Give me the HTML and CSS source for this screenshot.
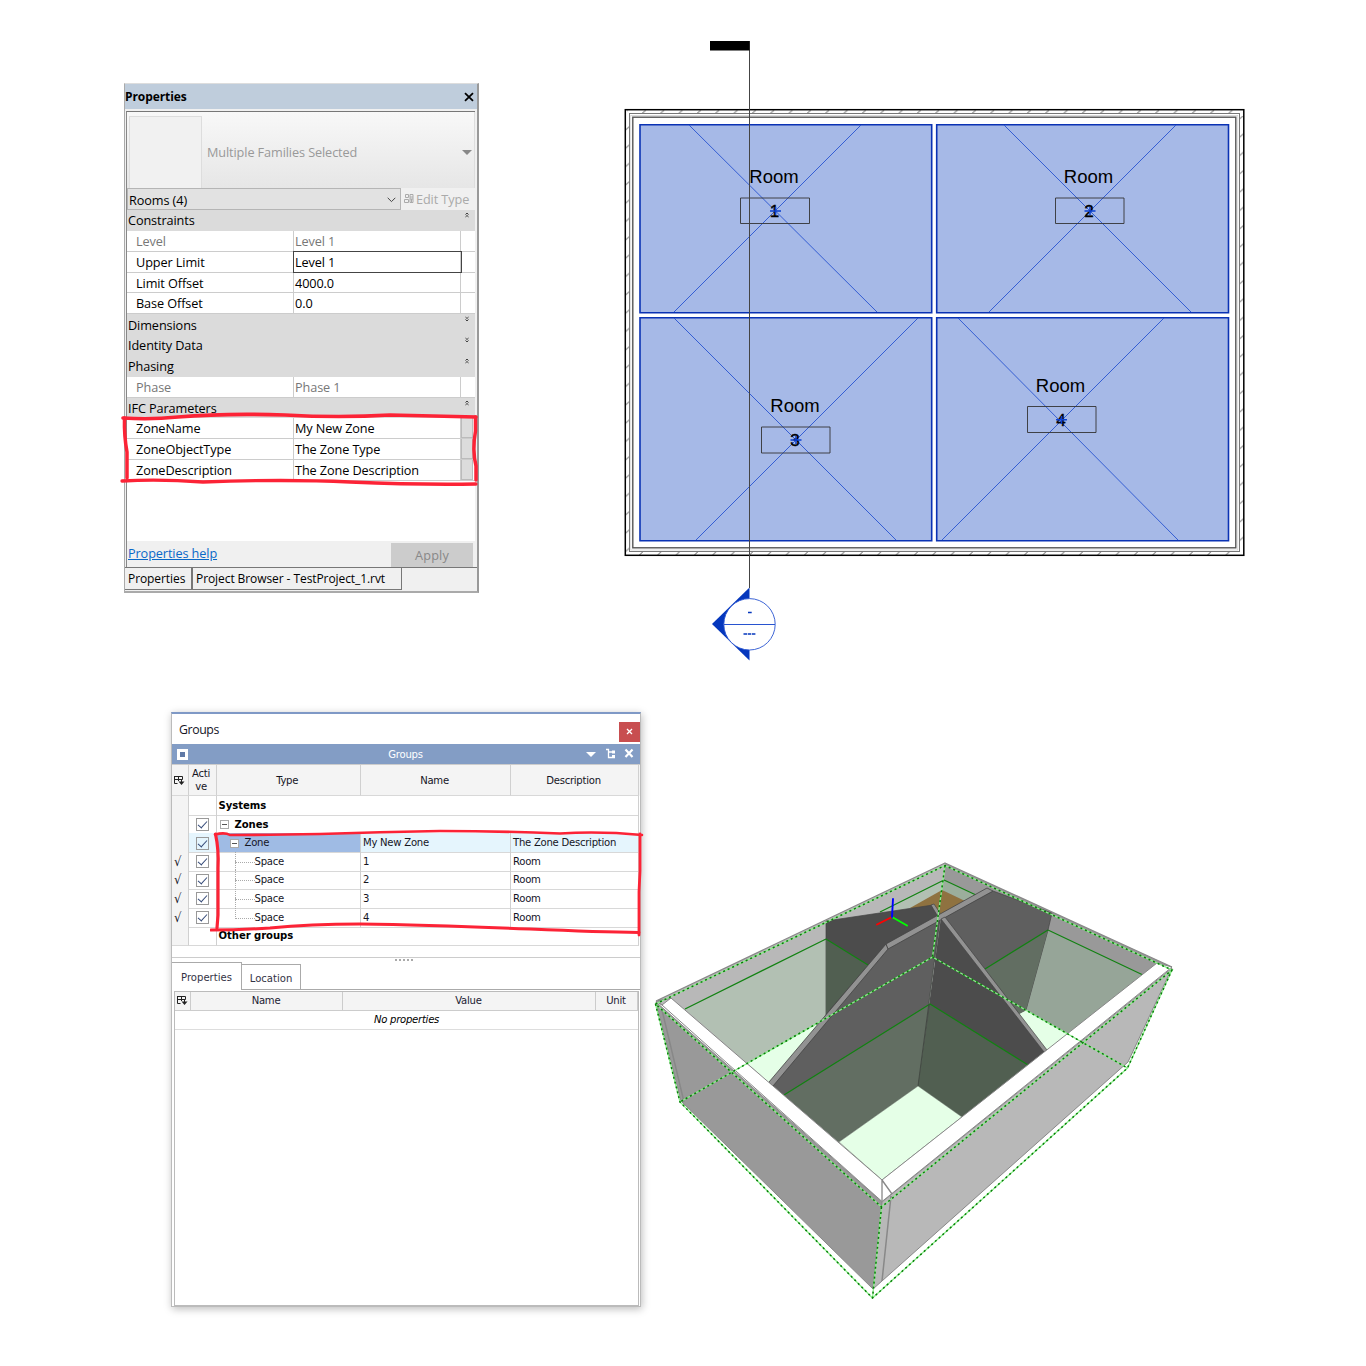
FILE: index.html
```html
<!DOCTYPE html>
<html lang="en">
<head>
<meta charset="utf-8">
<title>Zones and spaces</title>
<link rel="stylesheet" href="styles.css">
</head>
<body>
<main class="board">
<section class="top">
<article class="palette">
  <header class="palette-title"><b>Properties</b>
    <svg width="10" height="10" viewBox="0 0 10 10"><path d="M1 1.2 9 8.8M9 1.2 1 8.8" stroke="#000" stroke-width="1.8"/></svg>
  </header>
  <div class="palette-body">
    <div class="family"><div class="thumb"></div><span>Multiple Families Selected</span><i class="drop"></i></div>
    <div class="filter">
      <div class="select"><span>Rooms (4)</span><svg width="9" height="6" viewBox="0 0 9 6"><path d="M.7.8 4.5 4.6 8.3.8" fill="none" stroke="#444"/></svg></div>
      <div class="edit"><svg width="10" height="10" viewBox="0 0 10 10"><g fill="none" stroke="#aaa"><path d="M1.5.5h3v3h-3zM.5 5.5h4v3h-4zM6 .5h3v8H6zM6 3h3M6 5h3M7.5 5v4"/></g></svg><span>Edit Type</span></div>
    </div>
    <div class="group"><span>Constraints</span><svg class="chev" viewBox="0 0 4 5"><path d="M.5 2 2 .6 3.500 2M.5 4.400 2 3 3.500 4.400"/></svg></div>
    <div class="prop dim"><span>Level</span><span>Level 1</span><i></i></div>
    <div class="prop active"><span>Upper Limit</span><span>Level 1</span><i></i></div>
    <div class="prop"><span>Limit Offset</span><span>4000.0</span><i></i></div>
    <div class="prop"><span>Base Offset</span><span>0.0</span><i></i></div>
    <div class="group"><span>Dimensions</span><svg class="chev" viewBox="0 0 4 5"><path d="M.5.6 2 2 3.500.6M.5 3 2 4.400 3.500 3"/></svg></div>
    <div class="group"><span>Identity Data</span><svg class="chev" viewBox="0 0 4 5"><path d="M.5.6 2 2 3.500.6M.5 3 2 4.400 3.500 3"/></svg></div>
    <div class="group"><span>Phasing</span><svg class="chev" viewBox="0 0 4 5"><path d="M.5 2 2 .6 3.500 2M.5 4.400 2 3 3.500 4.400"/></svg></div>
    <div class="prop dim"><span>Phase</span><span>Phase 1</span><i></i></div>
    <div class="group"><span>IFC Parameters</span><svg class="chev" viewBox="0 0 4 5"><path d="M.5 2 2 .6 3.500 2M.5 4.400 2 3 3.500 4.400"/></svg></div>
    <div class="prop more"><span>ZoneName</span><span>My New Zone</span><i></i></div>
    <div class="prop more"><span>ZoneObjectType</span><span>The Zone Type</span><i></i></div>
    <div class="prop more"><span>ZoneDescription</span><span>The Zone Description</span><i></i></div>
    <div class="blank"></div>
    <footer class="help"><a>Properties help</a><div class="apply">Apply</div></footer>
  </div>
  <nav class="palette-tabs"><div class="on">Properties</div><div class="off">Project Browser - TestProject_1.rvt</div></nav>
  <svg class="ink ink-a" width="362" height="76" viewBox="120 412 362 76">
    <path d="M123 418Q150 420 178 417Q225 413 285 415Q340 418 390 415L476 417" stroke-width="3.600"/>
    <path d="M124.500 418Q124 436 127 452V478" stroke-width="3.500"/>
    <path d="M475.500 417V431Q472 450 476 466V480" stroke-width="3.500"/>
    <path d="M122 481Q160 479 203 482Q285 479 350 482Q420 485 476 484" stroke-width="3.300"/>
  </svg>
</article>

<svg class="plan" width="646" height="640" viewBox="610 30 646 640">
  <defs>
    <pattern id="hx" x="642" y="109.500" width="18.330" height="5" patternUnits="userSpaceOnUse"><path d="M0 4 4 .5" stroke="#444" stroke-width=".9"/></pattern>
    <pattern id="hxb" x="639" y="551" width="18.330" height="5" patternUnits="userSpaceOnUse"><path d="M0 4.500 4 .5" stroke="#444" stroke-width=".9"/></pattern>
    <pattern id="hy" x="625.500" y="126" width="4" height="18.330" patternUnits="userSpaceOnUse"><path d="M0 4 4 .5" stroke="#444" stroke-width=".9"/></pattern>
    <pattern id="hyr" x="1239.500" y="115" width="4" height="18.330" patternUnits="userSpaceOnUse"><path d="M0 4 4 .5" stroke="#444" stroke-width=".9"/></pattern>
  </defs>
  <path d="M627 110h615v4H627z" fill="url(#hx)"/><path d="M627 551.500h615v4H627z" fill="url(#hxb)"/>
  <path d="M625.500 116h4v436h-4z" fill="url(#hy)"/><path d="M1239.500 116h4v436h-4z" fill="url(#hyr)"/>
  <g fill="none">
    <rect x="625.300" y="109.700" width="618.500" height="445.600" stroke="#000" stroke-width="1.500"/>
    <rect x="629.500" y="113.500" width="610" height="438" stroke="#777"/>
    <rect x="630.800" y="115.500" width="607" height="434.500" stroke="#ccc" stroke-width=".7"/>
    <rect x="632.800" y="117.200" width="603" height="430.600" stroke="#555" stroke-width="1.400"/>
  </g>
  <g fill="#a6b9e7" stroke="#0a32b4" stroke-width="1.600">
    <path d="M640 124.700h291.700v188H640zM936.700 124.700h291.800v188H936.700zM640 317.800h291.700v222.900H640zM936.700 317.800h291.800v222.900H936.700z"/>
  </g>
  <path d="M689 125 877 312M861 125 674 312M1004 125 1191 312M1176 125 989 312M674 318 896 540M918 318 696 540M958 318 1178 540M1164 318 942 540" fill="none" stroke="#2854d0" stroke-width=".9"/>
  <path d="M740.500 198h69v25.500h-69zM1055.500 198h68.500v25.500h-68.500zM761.500 427h68.500v26h-68.500zM1027.500 406.500h68.500v26h-68.500z" fill="none" stroke="#333" stroke-width=".9"/>
  <path d="M749.500 41V588" fill="none" stroke="#444" stroke-width="1"/>
  <path d="M710 41h39.500v9.500H710z"/>
  <g class="room"><text x="774" y="183">Room</text><text x="1088.500" y="183">Room</text><text x="795" y="412">Room</text><text x="1060.500" y="392">Room</text></g>
  <g class="room num"><text x="774.500" y="217">1</text><text x="1089" y="217">2</text><text x="795" y="446">3</text><text x="1061" y="426">4</text></g>
  <path d="M770 211h11M775.500 207v8M1084.500 211h11M1090 207v8M790.500 440h11M796 436v8M1056 419.800h11M1061.500 416v8" stroke="#0a3fd0" stroke-width="1.500"/>
  <path d="M712 624 749.500 587.500V660.500Z" fill="#0537bd"/>
  <circle cx="749.500" cy="624.300" r="25.700" fill="#fff" stroke="#2854d0" stroke-width=".9"/>
  <path d="M724 624.500h51" stroke="#2854d0"/>
  <path d="M748 612.500h3.700M743.500 634h3.500M747.700 634h3.500M751.900 634h3.500" stroke="#0537bd" stroke-width="1.500"/>
</svg>
</section>

<section class="bottom">
<article class="groups">
  <header class="win-title"><span>Groups</span><div class="close"><svg width="7" height="7" viewBox="0 0 7 7"><path d="m1 1 5 5M6 1 1 6" stroke="#fff" stroke-width="1.300"/></svg></div></header>
  <div class="bar"><i class="sq"></i><span>Groups</span>
    <svg width="52" height="14" viewBox="0 0 52 14"><path d="M0 5h10L5 10z" fill="#fff"/><path d="M20 2.500h3M22.500 2v8.500H29M22.500 5H29" fill="none" stroke="#fff" stroke-width="1.300"/><path d="M26 3.500h3v3h-3zM26 8h3v3h-3z" fill="#fff"/><path d="m39.500 2.500 7 7.500M46.500 2.500 39.500 10" stroke="#fff" stroke-width="2.200"/></svg>
  </div>
  <div class="grid head">
    <div><svg width="12" height="11" viewBox="0 0 12 11"><path d="M1.500 1.500h8v3M1.500 1v7.500h3M1.500 4.500h8M5.500 1v5" fill="none" stroke="#222"/><path d="M5.500 6.500h6L8.500 10zM8 5h1v2H8z" fill="#222"/></svg></div>
    <div>Acti<br>ve</div><div>Type</div><div>Name</div><div>Description</div>
  </div>
  <div class="grid span"><div></div><div></div><div class="b">Systems</div></div>
  <div class="grid span"><div></div><div><i class="cb"></i></div><div class="b zones"><i class="minus"></i>Zones</div></div>
  <div class="grid sel"><div></div><div><i class="cb"></i></div><div class="zone"><i class="minus"></i>Zone</div><div>My New Zone</div><div>The Zone Description</div></div>
  <div class="grid"><div>√</div><div><i class="cb"></i></div><div class="space">Space</div><div>1</div><div>Room</div></div>
  <div class="grid"><div>√</div><div><i class="cb"></i></div><div class="space">Space</div><div>2</div><div>Room</div></div>
  <div class="grid"><div>√</div><div><i class="cb"></i></div><div class="space">Space</div><div>3</div><div>Room</div></div>
  <div class="grid"><div>√</div><div><i class="cb"></i></div><div class="space last">Space</div><div>4</div><div>Room</div></div>
  <div class="grid span"><div></div><div></div><div class="b">Other groups</div></div>
  <div class="splitter"><i></i></div>
  <nav class="tabs"><div class="on">Properties</div><div class="off">Location</div></nav>
  <div class="details">
    <div class="dhead"><div><svg width="12" height="11" viewBox="0 0 12 11"><path d="M1.500 1.500h8v3M1.500 1v7.500h3M1.500 4.500h8M5.500 1v5" fill="none" stroke="#222"/><path d="M5.500 6.500h6L8.500 10zM8 5h1v2H8z" fill="#222"/></svg></div><div>Name</div><div>Value</div><div>Unit</div></div>
    <div class="none">No properties</div>
  </div>
  <svg class="ink ink-b" width="434" height="112" viewBox="210 827 434 112">
    <path d="M215 834.500Q225 832 230 835Q270 835 320 834Q380 832 440 831Q500 831 560 833.500Q600 831 642 835" stroke-width="2.600"/>
    <path d="M215.500 834Q219 850 218 868V915L217 928" stroke-width="3.200"/>
    <path d="M640 834V871L639 892V935" stroke-width="2.800"/>
    <path d="M211 930Q240 930 270 928Q310 924 360 924Q430 925 530 929Q600 932 639 932.500" stroke-width="3"/>
  </svg>
</article>

<svg class="model" width="530" height="450" viewBox="650 855 530 450">
  <g stroke-linejoin="round">
  <!-- back walls and floor -->
  <path d="M656 1001 945 863 941 957 775 1085z" fill="#b8b8b8"/>
  <path d="M945 863 1172 967 1068 1036 940 957z" fill="#999"/>
  <path d="M685 1009 826 939V1024L747 1063z" fill="#b2c0b3"/>
  <path d="M880 912 944 880 942 892 910 909z" fill="#b2c0b3"/><path d="M944 880 976 895 965 901 942 890z" fill="#9bae9c"/>
  <path d="M942 890 965 901 941 916 910 908z" fill="#8f7240"/>
  <path d="M747 1063 830 1017 800 1070 769 1082z" fill="#e5ffe7"/>
  <path d="M1048 930 1143 975 1068 1034 1026 1010z" fill="#96a598"/>
  <path d="M1018 1014 1026 1010 1068 1034 1046 1052z" fill="#e5ffe7"/>
  <path d="M685 1009 826 939M880 912 944 880 976 895M1048 930 1143 975" stroke="#118211" stroke-width="1.200" fill="none"/>
  <!-- interior walls -->
  <path d="M826 921 933 905 941 916 886 949 826 1016z" fill="#4c4c4c" stroke="#444" stroke-width=".7"/>
  <path d="M826 939 868 965 826 1014z" fill="#515f51"/><path d="m826 939 42 26" stroke="#118211" stroke-width="1.200"/>
  <path d="M993 891 1052 913 1048 930 1026 1010 1018 1014 942 918z" fill="#5f5f5f" stroke="#444" stroke-width=".7"/>
  <path d="M985 969 1048 930 1026 1010 1019 1014z" fill="#626e62"/><path d="m985 969 63-39" stroke="#118211" stroke-width="1.200"/>
  <path d="M886 949 940 919 918 1086 839 1142 771 1085z" fill="#5f5f5f"/>
  <path d="M784 1095 930 1004 918 1086 838 1142z" fill="#626e62"/>
  <path d="M941 917 1046 1051 1028 1066 962 1117 918 1086z" fill="#4c4c4c"/>
  <path d="M930 1004 1028 1065 962 1117 918 1086z" fill="#515f51"/>
  <path d="M784 1095 930 1004 1028 1065" stroke="#118211" stroke-width="1.200" fill="none"/>
  <path d="M940 919 918 1086" stroke="#3d443d" stroke-width=".8"/>
  <path d="M918 1086 962 1117 882 1180 839 1142z" fill="#e5ffe7" stroke="#647064" stroke-width=".6"/>
  <path d="M769 1082 886 944 987 888 993 891 888 949 773 1086z" fill="#929292" stroke="#444" stroke-width=".8"/>
  <path d="M886 944 888 949" stroke="#444"/>
  <path d="M941 919 945 917 1047 1050 1044 1052zM931 905 934 904 940 913 937 915z" fill="#929292" stroke="#444" stroke-width=".7"/>
  <!-- outer faces and rim -->
  <path d="M656 1002 882 1202 873 1289 681 1101z" fill="#999" stroke="#888"/>
  <path d="M882 1202 1172 968 1128 1062 873 1289z" fill="#b8b8b8" stroke="#888"/>
  <path d="m662 1010 22 92M891 1196 882 1281" stroke="#888" stroke-width="1.500"/>
  <path d="M662 1005 671 998 882 1180 1157 963 1172 967 882 1201.500z" fill="#fff" stroke="#888"/>
  <path d="M882 1180v21M882 1180 892 1194M656 1001 945 863 1172 967M656 1001l6 4M671 998l-13 3" fill="none" stroke="#888" stroke-width="1.300"/>
  </g>
  <path class="cage" d="M655.500 1004 945 865.500 1172 970 881.500 1207zL680 1102 872.500 1298 1127.500 1068 1172 970M881.500 1207 872.500 1298M945 865.500 932.500 957 680 1102M932.500 957 1127.500 1068"/>
  <path class="cage dots" d="M655.500 1004 945 865.500 1172 970 881.500 1207zL680 1102 872.500 1298 1127.500 1068 1172 970M881.500 1207 872.500 1298M945 865.500 932.500 957 680 1102M932.500 957 1127.500 1068"/>
  <g stroke-width="1.900" stroke-linecap="round"><path d="m892 917-15 7.500" stroke="#f00"/><path d="m892 917 15 8.500" stroke="#0f0"/><path d="m892 917 1-18" stroke="#00f"/></g>
</svg>
</section>
</main>
</body>
</html>
```
FILE: styles.css
```css
*{box-sizing:border-box}
body{margin:0;background:#fff;color:#000}
svg{display:block;flex:none}
.board{width:1366px;height:1366px;overflow:hidden}
.top{height:700px;display:flex;align-items:flex-start}
.bottom{height:666px;display:flex;align-items:flex-start}
.plan{margin:30px 0 0 131px}
.model{margin:155px 0 0 9px}

/* Properties palette */
.palette{position:relative;width:355px;height:510px;margin:83px 0 0 124px;border:1px solid #ddd;border-left-color:#aaa;border-right:2px solid #999;border-bottom:2px solid #aaa;background:#f0f0f0;font:12.700px/20px "Open Sans","Noto Sans",sans-serif;letter-spacing:-.1px;white-space:nowrap}
.palette-title{height:25px;background:#bfcddc;display:flex;align-items:center;justify-content:space-between;padding:1px 3px 0 0;font-size:12px}
.palette-title b{letter-spacing:-.08px}
.palette-body{margin:2px 2px 0 1px;border-left:1px solid #888;border-top:1px solid #777;height:456px}
.family{height:76px;display:flex;align-items:center;background:linear-gradient(#f8f8f8,#e6e6e6);color:#999;padding:4px 2px 0 2px;border-right:1px solid #ddd}
.thumb{width:73px;height:73px;border:1px solid #ddd;background:#f1f1f1;margin-right:5px}
.family span{flex:1}
.drop{border:5px solid transparent;border-top-color:#888;border-bottom:0}
.filter{height:22px;display:flex}
.select{width:274px;border:1px solid #b5b5b5;background:#e2e2e2;display:flex;align-items:center;justify-content:space-between;padding:2px 4px 0 1px}
.edit{flex:1;display:flex;align-items:center;gap:2px;padding-left:3px;color:#aaa}
.group,.prop{height:20.850px;display:flex}
.group{background:#dbdbdb;align-items:center;justify-content:space-between;padding:0 6px 0 1px}
.chev{width:4px;height:6px;margin-bottom:11px;fill:none;stroke:#222;stroke-width:.9}
.prop{background:#fff;border-bottom:1px solid #ccc;line-height:20px}
.prop span:first-child{width:167px;border-right:1px solid #ccc;padding-left:9px}
.prop span+span{width:167px;padding-left:1px;border-right:1px solid #ccc}
.dim{color:#777}
.active span+span{outline:1px solid #444;outline-offset:-.5px}
.more i{flex:1;background:#dcdcdc;border:1px solid #bbb;border-top:0;margin-right:2px}
.blank{height:60px;background:#fff}
.help{height:26px;display:flex;justify-content:space-between;padding:2px 2px 0 1px;line-height:20px}
.help a{color:#0a68c8;text-decoration:underline}
.apply{width:82px;height:24px;background:#ccc;color:#888;text-align:center;line-height:25px;letter-spacing:.15px}
.palette-tabs{display:flex;border-top:1px solid #777;font-size:12px;line-height:22px;height:23px;letter-spacing:-.08px}
.palette-tabs div{height:22px;border-right:1px solid #777;border-bottom:1px solid #777;padding-left:3px}
.palette-tabs .on{width:67px}
.palette-tabs .off{width:210px;border-left:1px solid #777;padding-left:3px}
.ink{position:absolute;fill:none;stroke:#fc2336;stroke-linecap:round}
.ink-a{left:-5px;top:328px}

/* Floor plan labels */
.room{font:18.500px "Liberation Sans",Arial,sans-serif;text-anchor:middle}
.num{font-size:17px;stroke:#000;stroke-width:.4}

/* Groups window */
.groups{position:relative;width:470px;height:595px;margin:12px 0 0 171px;background:#fff;border:1px solid #bbb;border-top:2px solid #7f99c6;box-shadow:1px 2px 8px #0004;font:11.200px/13px "DejaVu Sans Condensed","DejaVu Sans",sans-serif;font-stretch:condensed;letter-spacing:-.25px;color:#15151f;white-space:nowrap}
.win-title{height:30px;display:flex;justify-content:space-between;align-items:center;padding:2px 0 0 7px;font:12.300px "Open Sans","Noto Sans",sans-serif;letter-spacing:-.4px}
.win-title span{margin-bottom:1px}
.close{width:21px;height:20px;background:#c84e50;margin-top:3px;display:flex;align-items:center;justify-content:center}
.bar{height:20px;background:#839dc5;display:flex;align-items:center;color:#fff;padding:0 2px 0 5px}
.bar span{flex:1;text-align:center;padding-left:37px}
.sq{width:11px;height:11px;border:3px solid #fff;background:#5f79a6}
.grid{display:grid;grid-template-columns:16.500px 28px 144.500px 150px 128px;height:18.600px;line-height:18px}
.grid>div{border-right:1px solid #d0d0d0;border-bottom:1px solid #d8d8d8;padding:1px 0 0 2px;display:flex;align-items:center}
.grid>div:first-child{background:#f4f4f4;font-size:13px}
.grid>div:nth-child(2){padding-left:7.500px}
.head{height:32px;background:#f4f4f4;line-height:13px;border-top:1px solid #ccc}
.grid.head>div{justify-content:center;text-align:center;padding:0 2px 0 0}
.span>div:last-child{grid-column:3/6}
.b{font-weight:bold;color:#000;letter-spacing:-.05px}
.cb{width:13px;height:13px;border:1px solid #999;display:flex;justify-content:center}
.cb:after{content:"";width:4px;height:8px;border:solid #354a78;border-width:0 1.500px 1.500px 0;transform:rotate(42deg)}
.minus{width:9px;height:9px;border:1px solid #aaa;background:linear-gradient(#555,#555) center/5px 1px no-repeat #fff}
.zones .minus{margin:0 6px 0 1px}
.sel>div:nth-child(n+2){background:#e5f5fd}
.sel>.zone:nth-child(3){background:#9fbbe4}
.zone .minus{margin:0 6px 0 11px}
.grid>.space{padding-left:38px;position:relative}
.space:before{content:"";width:19px;height:10px;border-left:1px dotted #aaa;border-bottom:1px dotted #aaa;margin:-9px 0 0 -20px}
.space:not(.last):after{content:"";position:absolute;left:18px;top:9px;height:9px;border-left:1px dotted #aaa}
.splitter{height:17px;background:linear-gradient(#ccc,#ccc) 0 12px/100% 1px no-repeat;display:flex;justify-content:center;align-items:flex-end}
.splitter i{width:20px;height:2px;margin:0 3px 1px 0;background:linear-gradient(90deg,#aaa 50%,#0000 0) 0/4px 2px}
.tabs{display:flex;align-items:flex-end;height:28px;border-bottom:1px solid #aaa;color:#334;letter-spacing:0}
.tabs div{border:1px solid #aaa;border-bottom:0;display:flex;align-items:center;justify-content:center}
.tabs .on{width:70px;height:28px;margin-bottom:-1px;background:#fff;padding-top:2px;border-left:0}
.tabs .off{width:59px;height:25px;border-left:0;padding-top:3px}
.details{margin:1px 1px 0 2px;height:315px;border:1px solid #bbb}
.dhead{display:grid;grid-template-columns:16px 152px 253px 1fr;height:19px;background:#f4f4f4;line-height:18px;color:#223}
.dhead div{border-right:1px solid #ccc;border-bottom:1px solid #ccc;display:flex;justify-content:center;align-items:center;padding-right:1px}
.none{height:19px;border-bottom:1px solid #ddd;text-align:center;font-style:italic;line-height:18px;color:#000}
.ink-b{left:38px;top:113px}

/* Model selection cage */
.cage{fill:none;stroke:#8cf08c;stroke-width:1.300}
.dots{stroke:#087c08;stroke-width:1.500;stroke-dasharray:2 3}
```
